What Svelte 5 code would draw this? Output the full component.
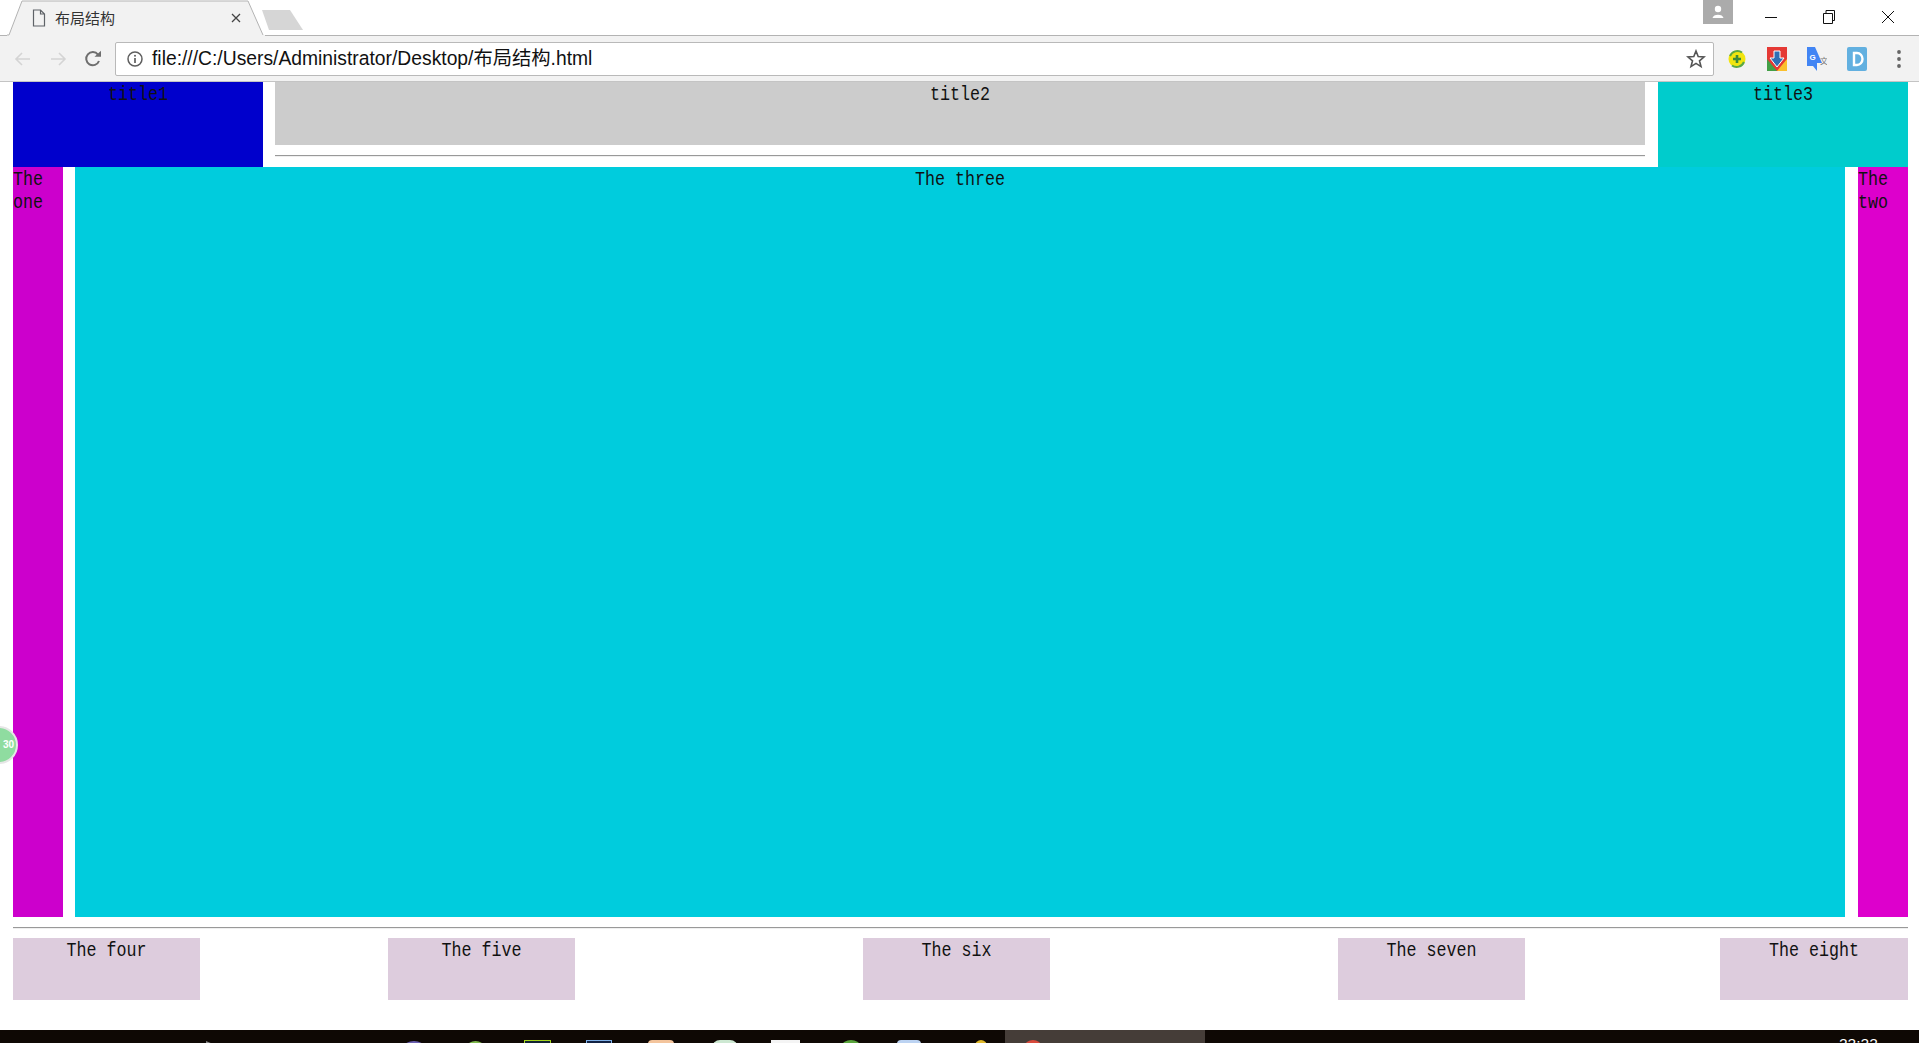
<script>
  const boxes = [
    { label: 'The four', cls: 'b1' },
    { label: 'The five', cls: 'b2' },
    { label: 'The six', cls: 'b3' },
    { label: 'The seven', cls: 'b4' },
    { label: 'The eight', cls: 'b5' }
  ];
  const taskIcons = ['t-play','t-purple','t-green','t-lime','t-blue','t-orange','t-mint','t-white','t-leaf','t-sky','t-yellow'];
</script>

<div class="window">
  <header class="tabstrip">
    <div class="tab">
      <svg class="tabshape" width="258" height="36" viewBox="0 0 258 36"><path d="M0 35 H2 L15 1 H241 L256 35 H258 V36 H0 Z" fill="#f2f2f2"/><path d="M0 35 H2 L15 1 H241 L256 35" fill="none" stroke="#b3b3b3"/></svg>
      <svg class="docicon" width="14" height="18" viewBox="0 0 14 18"><path d="M1.5 1 H8.5 L12.5 5 V17 H1.5 Z M8.5 1 V5 H12.5" fill="none" stroke="#5f6368" stroke-width="1.2"/></svg>
      <span class="tabtitle">布局结构</span>
      <svg class="tabclose" width="10" height="10" viewBox="0 0 10 10"><path d="M1 1 L9 9 M9 1 L1 9" stroke="#444" stroke-width="1.3"/></svg>
    </div>
    <svg class="newtab" width="44" height="22" viewBox="0 0 44 22"><path d="M2 1 H30 L43 21 H9 Z" fill="#d6d6d6"/></svg>
    <div class="winctl">
      <div class="avatar"><svg width="16" height="16" viewBox="0 0 16 16"><circle cx="8" cy="5" r="3.2" fill="#fff"/><path d="M2.5 14 C3 9.5 13 9.5 13.5 14 Z" fill="#fff"/></svg></div>
      <svg class="wbtn min" width="14" height="14" viewBox="0 0 14 14"><path d="M1 7.5 H13" stroke="#111" stroke-width="1"/></svg>
      <svg class="wbtn rest" width="14" height="16" viewBox="0 0 14 16"><path d="M1.5 4.5 H10.5 V14.5 H1.5 Z M4 4.5 V1.5 H12.5 V11.5 H10.5" fill="none" stroke="#111"/></svg>
      <svg class="wbtn clo" width="14" height="14" viewBox="0 0 14 14"><path d="M1 1 L13 13 M13 1 L1 13" stroke="#111" stroke-width="1"/></svg>
    </div>
  </header>

  <nav class="toolbar">
    <svg class="nav back" width="18" height="16" viewBox="0 0 18 16"><path d="M16 8 H2 M8 2 L2 8 L8 14" fill="none" stroke="#d4d4d4" stroke-width="1.6"/></svg>
    <svg class="nav fwd" width="18" height="16" viewBox="0 0 18 16"><path d="M2 8 H16 M10 2 L16 8 L10 14" fill="none" stroke="#d4d4d4" stroke-width="1.6"/></svg>
    <svg class="nav reload" width="18" height="18" viewBox="0 0 18 18"><path d="M15 11 A6.6 6.6 0 1 1 14 4.6" fill="none" stroke="#6e6e6e" stroke-width="2"/><path d="M10.5 6.8 H17 V0.8 Z" fill="#6e6e6e"/></svg>
    <div class="omnibox">
      <svg class="info" width="16" height="16" viewBox="0 0 16 16"><circle cx="8" cy="8" r="7" fill="none" stroke="#5f5f5f" stroke-width="1.5"/><path d="M8 7 V12" stroke="#5f5f5f" stroke-width="1.7"/><circle cx="8" cy="4.7" r="1" fill="#5f5f5f"/></svg>
      <span class="url">file:///C:/Users/Administrator/Desktop/布局结构.html</span>
      <svg class="star" width="20" height="20" viewBox="0 0 20 20"><path d="M10 2 L12.2 7.6 L18 8 L13.5 11.8 L15 17.6 L10 14.4 L5 17.6 L6.5 11.8 L2 8 L7.8 7.6 Z" fill="none" stroke="#555" stroke-width="1.6"/></svg>
    </div>
    <div class="exts">
      <svg width="20" height="20" viewBox="0 0 20 20"><circle cx="10" cy="10" r="8.5" fill="#f2e50f"/><path d="M3 7 A8 8 0 0 1 15 3.5 M17 13 A8 8 0 0 1 5 16.5" fill="none" stroke="#5aa845" stroke-width="2"/><path d="M10 6 V14 M6 10 H14" stroke="#3c8a3a" stroke-width="2.6"/></svg>
      <svg width="20" height="24" viewBox="0 0 20 24"><rect width="20" height="24" fill="#e53935"/><path d="M0 12 L10 24 H0 Z" fill="#43a047"/><path d="M20 12 L10 24 H20 Z" fill="#fbc02d"/><path d="M7 4 H13 V11 H17 L10 20 L3 11 H7 Z" fill="#2f6fb5" stroke="#fff" stroke-width="1"/></svg>
      <svg width="20" height="24" viewBox="0 0 20 24"><path d="M0 0 H8 L15 16 H10 L10 24 L6 19 H0 Z" fill="#4285f4"/><text x="2.5" y="13" class="gt">G</text><text x="13" y="17" class="gt2">文</text></svg>
      <svg width="20" height="24" viewBox="0 0 20 24"><rect width="20" height="24" rx="2" fill="#62b0e0"/><path d="M7 6 H10 A5.5 6 0 0 1 10 18 H7 Z" fill="none" stroke="#fff" stroke-width="2.4"/></svg>
    </div>
    <svg class="menu" width="6" height="20" viewBox="0 0 6 20"><circle cx="3" cy="3" r="1.9" fill="#666"/><circle cx="3" cy="10" r="1.9" fill="#666"/><circle cx="3" cy="17" r="1.9" fill="#666"/></svg>
  </nav>

  <main class="page">
    <section class="top">
      <div class="title1"><div class="label">title1</div></div>
      <div class="titlecol">
        <div class="title2"><div class="label">title2</div></div>
        <div class="rule inner"></div>
      </div>
      <div class="title3"><div class="label">title3</div></div>
    </section>
    <section class="middle">
      <div class="one"><div class="label">The one</div></div>
      <div class="three"><div class="label">The three</div></div>
      <div class="two"><div class="label">The two</div></div>
    </section>
    <div class="rule lower"></div>
    <section class="bottom">
      {#each boxes as b}
        <div class="box {b.cls}"><div class="label">{b.label}</div></div>
      {/each}
    </section>
  </main>

  <footer class="taskbar">
    {#each taskIcons as t}
      <span class="ti {t}"></span>
    {/each}
    <span class="active"><span class="ti t-red"></span></span>
    <span class="clock">22:22</span>
  </footer>

  <div class="badge">30</div>
</div>

<style>
  :global(body) { margin: 0; background: #fff; overflow: hidden; }
  .window { position: relative; width: 1919px; height: 1043px; overflow: hidden; display: flex; flex-direction: column; font-family: "Liberation Mono", monospace; color: #000; }

  .tabstrip { height: 36px; flex: none; display: flex; align-items: flex-start; background: #fff; box-shadow: inset 0 -1px 0 #b3b3b3; }
  .tab { position: relative; width: 258px; height: 36px; margin-left: 7px; flex: none; display: flex; align-items: center; }
  .tabshape { position: absolute; left: 0; top: 0; }
  .docicon { position: relative; margin: 0 0 0 25px; }
  .tabtitle { position: relative; margin: -2px 0 0 9px; font: 15px "Noto Sans CJK SC", sans-serif; color: #333; width: 166px; }
  .tabclose { position: relative; margin-left: 10px; }
  .newtab { margin: 9px 0 0 -5px; flex: none; }
  .winctl { margin-left: auto; display: flex; align-items: flex-start; height: 36px; }
  .avatar { width: 30px; height: 24px; background: #ababab; display: flex; align-items: center; justify-content: center; margin-right: -1px; }
  .wbtn { flex: none; }
  .min { margin: 10px 0 0 32px; }
  .rest { margin: 9px 0 0 44px; }
  .clo { margin: 10px 24px 0 45px; }

  .toolbar { height: 46px; flex: none; background: #f2f2f2; display: flex; align-items: center; box-sizing: border-box; box-shadow: inset 0 -1px 0 #c4c4c4; }
  .nav { flex: none; }
  .back { margin-left: 14px; }
  .fwd { margin-left: 17px; }
  .reload { margin-left: 17px; }
  .omnibox { margin-left: 13px; width: 1599px; height: 34px; box-sizing: border-box; background: #fff; border: 1px solid #b9b9b9; border-radius: 2px; display: flex; align-items: center; flex: none; }
  .info { margin-left: 11px; flex: none; }
  .url { margin-left: 9px; margin-top: -4px; font: 19.3px "Liberation Sans", "Noto Sans CJK SC", sans-serif; color: #111; white-space: nowrap; }
  .star { margin-left: auto; margin-right: 7px; }
  .exts { display: flex; align-items: center; gap: 20px; margin-left: 13px; }
  .gt { font: bold 8px "Liberation Sans", sans-serif; fill: #fff; }
  .gt2 { font: 8px "Noto Sans CJK SC", sans-serif; fill: #777; }
  .menu { margin-left: 29px; }

  .page { flex: 1; box-sizing: border-box; padding: 0 11px 0 13px; font-size: 16.67px; line-height: 19.17px; text-align: center; }
  .label { padding-top: 1px; transform: scaleY(1.2); transform-origin: top; color: #111; }
  .top { display: flex; height: 85px; }
  .title1 { width: 250px; background: #0000cc; }
  .titlecol { width: 1370px; margin: 0 13px 0 12px; }
  .title2 { height: 63px; background: #cccccc; }
  .title3 { width: 250px; background: #00cccc; }
  .rule { border-top: 1px solid #999; border-bottom: 1px solid #efefef; }
  .inner { margin-top: 10px; }
  .middle { display: flex; height: 750px; }
  .one, .two { width: 50px; text-align: left; }
  .one { background: #cc00cc; }
  .two { background: #dd00cc; }
  .three { width: 1770px; margin: 0 13px 0 12px; background: #00ccdd; }
  .lower { margin-top: 10px; }
  .bottom { display: flex; margin-top: 9px; }
  .box { width: 187px; height: 62px; background: #ddccdd; flex: none; }
  .b2 { margin-left: 188px; }
  .b3 { margin-left: 288px; }
  .b4 { margin-left: 288px; }
  .b5 { margin-left: 195px; width: 188px; }

  .taskbar { position: relative; height: 13px; flex: none; background: #0e0804; display: flex; align-items: flex-start; overflow: hidden; }
  .ti { display: block; flex: none; height: 12px; margin-top: 10px; }
  .t-play { width: 14px; margin-left: 206px; margin-top: 11px; background: #8a8a8a; clip-path: polygon(0 0, 100% 50%, 0 100%); }
  .t-purple { width: 20px; margin-left: 184px; margin-top: 11px; border-radius: 50%; background: #6a5fb0; }
  .t-green { width: 17px; margin-left: 43px; margin-top: 11px; border-radius: 50%; background: #7db84a; }
  .t-lime { width: 27px; margin-left: 40px; border: 1px solid #a5d51f; box-sizing: border-box; background: #123; }
  .t-blue { width: 26px; margin-left: 35px; border: 1px solid #7fb0e8; box-sizing: border-box; background: #124; }
  .t-orange { width: 26px; margin-left: 36px; background: #f3c49c; border-radius: 4px 4px 0 0; }
  .t-mint { width: 26px; margin-left: 38px; background: #cde8d2; border-radius: 8px 8px 0 0; }
  .t-white { width: 29px; margin-left: 33px; background: #f4f4f4; }
  .t-leaf { width: 18px; margin-left: 42px; background: #5aa53c; border-radius: 50%; }
  .t-sky { width: 24px; margin-left: 37px; background: #bcd3f2; border-radius: 4px 4px 0 0; }
  .t-yellow { width: 12px; margin-left: 54px; background: #e0b92a; border-radius: 50%; }
  .active { display: block; margin-left: 18px; width: 200px; height: 13px; background: #453d38; flex: none; }
  .t-red { width: 16px; margin: 10px 0 0 20px; background: #d84a3c; border-radius: 50%; }
  .clock { margin-left: 634px; margin-top: 6px; font: 15.5px "Liberation Sans", sans-serif; color: #fff; line-height: 16px; }

  .badge { position: absolute; left: -20px; top: 726px; width: 38px; height: 38px; box-sizing: border-box; border-radius: 50%; background: #8fdca0; border: 2px solid #e6e6e6; color: #fff; font: bold 10px/34px "Liberation Sans", sans-serif; text-align: right; padding-right: 2px; }
</style>
